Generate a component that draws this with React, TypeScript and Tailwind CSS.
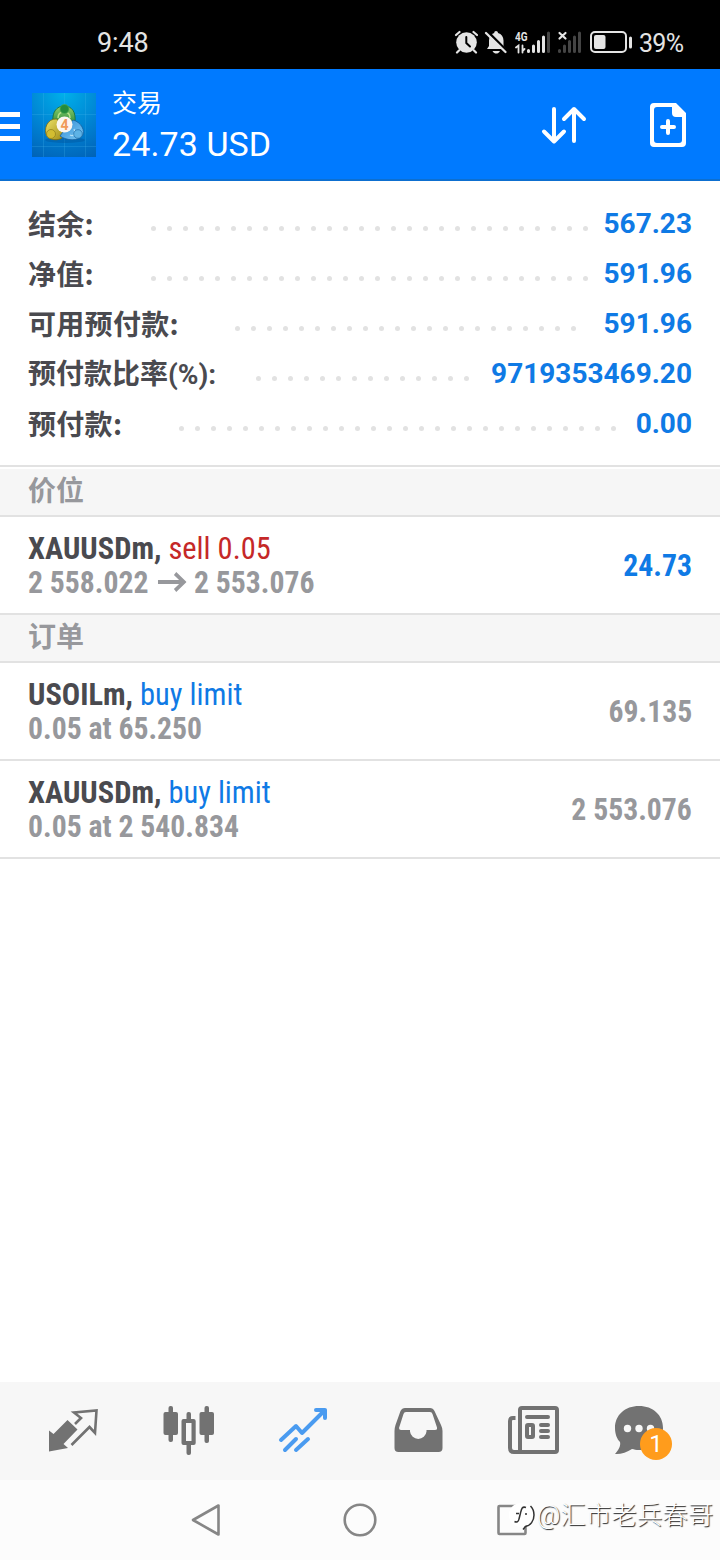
import React from 'react';

interface Balance {
  label: string;
  value: string;
  labelStyle: string;
  dots: number;
}

interface Order {
  symbol: string;
  type: string;
  typeColor: string;
  price: React.ReactNode;
  value: string;
  valueColor: string;
}

const cjk = "pt-0 font-['Noto_Sans_CJK_SC',sans-serif] tracking-[0.3px]";

const balances: Balance[] = [
  { label: '结余:', value: '567.23', labelStyle: `w-[123px] ${cjk}`, dots: 28 },
  { label: '净值:', value: '591.96', labelStyle: `w-[123px] ${cjk}`, dots: 28 },
  { label: '可用预付款:', value: '591.96', labelStyle: `w-[207px] ${cjk}`, dots: 22 },
  { label: '预付款比率(%):', value: '9719353469.20', labelStyle: 'w-[228px] pt-[4px]', dots: 14 },
  { label: '预付款:', value: '0.00', labelStyle: `w-[151px] ${cjk}`, dots: 28 },
];

const positions: Order[] = [
  {
    symbol: 'XAUUSDm,',
    type: 'sell 0.05',
    typeColor: 'text-[#c52828]',
    price: (
      <>
        2 558.022
        <svg className="ml-[10px] mr-[8px] inline-block align-[1px]" width="31" height="20" viewBox="0 0 31 20" fill="none" stroke="currentColor" strokeWidth="3.8">
          <path d="M0 10H28M18.500 1.5L28 10L18.500 18.5" />
        </svg>
        2 553.076
      </>
    ),
    value: '24.73',
    valueColor: 'text-[#0f7ae5]',
  },
];

const orders: Order[] = [
  { symbol: 'USOILm,', type: 'buy limit', typeColor: 'text-[#0f7ae5]', price: '0.05 at 65.250', value: '69.135', valueColor: 'text-[#97989c]' },
  { symbol: 'XAUUSDm,', type: 'buy limit', typeColor: 'text-[#0f7ae5]', price: '0.05 at 2 540.834', value: '2 553.076', valueColor: 'text-[#97989c]' },
];

function StatusBar() {
  return (
    <div className="flex h-[69px] items-center bg-black pl-[97px] pt-[15px] text-[#e4e4e4]">
      <span className="w-[357px] pt-[2px] text-[27px] leading-[24px] tracking-[-0.1px]">9:48</span>
      <svg width="24" height="24" viewBox="0 0 24 24" fill="none" stroke="#e4e4e4" strokeLinecap="round">
        <circle cx="12.5" cy="12.5" r="10.3" fill="#e4e4e4" stroke="none" />
        <path d="M2 5L5.5 2M19.5 2L23 5M5 20.5L3 22.5M20 20.5L22 22.5" strokeWidth="2.2" />
        <path d="M12.3 7V13L16 16.5" stroke="#000" strokeWidth="2" />
      </svg>
      <svg className="ml-[6px]" width="24" height="24" viewBox="0 0 24 24">
        <path d="M12 1C13 1 14 1.8 14 3C17.5 4 19.5 6.8 19.5 10.5V16L22 19H3L5 16V10.5C5 6.8 7 4 10.2 3C10.2 1.8 11 1 12 1Z" fill="#e4e4e4" />
        <path d="M8.5 21H16C15 23 13.5 23.5 12.3 23.5C11 23.5 9.5 23 8.5 21Z" fill="#e4e4e4" />
        <path d="M3.5 1.5L23.5 21.5" stroke="#000" strokeWidth="2.5" />
        <path d="M2 3L21.5 22" stroke="#e4e4e4" strokeWidth="2.3" strokeLinecap="round" />
      </svg>
      <svg className="ml-[7px]" width="66" height="24" viewBox="0 0 66 24" strokeLinecap="round">
        <text x="0" y="10.5" fontSize="13" fontWeight="700" fill="#e4e4e4" textLength="12.5" lengthAdjust="spacingAndGlyphs">4G</text>
        <path d="M1 17.5L3.5 15.5V22.5M7.5 15.5V22.5M7.5 21L9.5 19" stroke="#e4e4e4" strokeWidth="1.8" fill="none" />
        <path d="M13.5 20.5V21.5M18.5 16V21.5M23.5 11.5V21.5M28.5 7V21.5" stroke="#e4e4e4" strokeWidth="3" />
        <path d="M33.5 3V21.5" stroke="#444" strokeWidth="3" />
        <path d="M44.5 3L50.5 8.5M50.5 3L44.5 8.5" stroke="#e4e4e4" strokeWidth="2.2" />
        <path d="M44.5 20.5V21.5M49.5 16V21.5M54.5 11.5V21.5M59.5 7V21.5M64.5 3V21.5" stroke="#444" strokeWidth="3" />
      </svg>
      <svg className="ml-[9px]" width="43" height="24" viewBox="0 0 43 24">
        <rect x="1" y="2" width="35" height="20" rx="4" fill="none" stroke="#e4e4e4" strokeWidth="2" />
        <rect x="4" y="5" width="11.5" height="14" rx="2" fill="#e4e4e4" />
        <rect x="39" y="6.5" width="3" height="12" rx="1.5" fill="#e4e4e4" />
      </svg>
      <span className="ml-[6px] pt-[3px] text-[25px] leading-[24px] tracking-[-0.7px]">39%</span>
    </div>
  );
}

function Logo() {
  return (
    <svg width="64" height="64" viewBox="0 0 64 64">
      <defs>
        <radialGradient id="sky" cx="0.5" cy="0" r="1.1">
          <stop offset="0" stopColor="#00b0ea" />
          <stop offset="0.6" stopColor="#007fd0" />
          <stop offset="1" stopColor="#0063b8" />
        </radialGradient>
        <linearGradient id="green" x1="0" y1="0" x2="0" y2="1">
          <stop offset="0" stopColor="#8fd06c" />
          <stop offset="1" stopColor="#157b31" />
        </linearGradient>
        <linearGradient id="yellow" x1="0" y1="0" x2="1" y2="1">
          <stop offset="0" stopColor="#eee36a" />
          <stop offset="1" stopColor="#a08b14" />
        </linearGradient>
        <linearGradient id="blue" x1="0" y1="0" x2="1" y2="1">
          <stop offset="0" stopColor="#2f8cd6" />
          <stop offset="1" stopColor="#7cc8f3" />
        </linearGradient>
      </defs>
      <rect width="64" height="64" fill="url(#sky)" />
      <path d="M11.5 0V64M32.5 0V64M53.5 0V64M0 21.5H64M0 53.5H64" stroke="#48b6ee" strokeOpacity="0.3" strokeWidth="0.8" />
      <ellipse cx="33" cy="47" rx="20" ry="3" fill="#004a90" opacity="0.35" />
      <path d="M21 28C20 19 25 13 32 13C40 13 44 19 43 29L39 35L25 30Z" fill="url(#green)" stroke="#17692f" strokeWidth="0.8" />
      <path d="M25 26C15 25 11 37 15 43C17 47 26 48 30 45L32 38Z" fill="url(#yellow)" stroke="#756713" strokeWidth="0.8" />
      <path d="M41 27C49 29 54 38 50 43C46 48 35 48 28 43L33 36Z" fill="url(#blue)" stroke="#17609e" strokeWidth="0.8" />
      <path d="M26 25C26 20 29 19 32 19C36 19 38 21 38 25" fill="none" stroke="#b7e18b" strokeWidth="1.5" />
      <path d="M38 42C42 44 44 40 42 36" fill="none" stroke="#b5e1f8" strokeWidth="1.2" />
      <circle cx="32.5" cy="16" r="4.5" fill="#248b3c" stroke="#4dac52" strokeWidth="0.7" />
      <circle cx="19" cy="41" r="4.5" fill="#d3bd31" stroke="#8f7d19" strokeWidth="0.7" />
      <circle cx="46" cy="41" r="4.3" fill="#5eb3e6" stroke="#1f6da8" strokeWidth="0.7" />
      <circle cx="32.5" cy="31.5" r="8" fill="#fbf6f0" />
      <text x="32.5" y="36.8" textAnchor="middle" fontSize="14" fontWeight="700" fill="#f09a58">4</text>
    </svg>
  );
}

function Header() {
  return (
    <header className="flex h-28 items-center border-b-2 border-[#0d6fd0] bg-[#007aff] pt-[2px] text-white">
      <div className="mr-3 mt-[2px] flex w-5 flex-col gap-[7px]">
        <span className="h-[5px] bg-white" />
        <span className="h-[5px] bg-white" />
        <span className="h-[5px] bg-white" />
      </div>
      <Logo />
      <div className="ml-4 flex w-[428px] flex-col pt-[4px]">
        <span className="text-[25px] leading-[32px]">交易</span>
        <span className="mt-[2px] text-[34px] leading-[44px] tracking-[0.1px]">24.73 USD</span>
      </div>
      <svg width="48" height="40" viewBox="0 0 48 40" fill="none" stroke="white" strokeWidth="4" strokeLinecap="round" strokeLinejoin="round">
        <path d="M14 4V36M4 26.5L14 36.5L24 26.5M34 36V4M24 14L34 4L44 14" />
      </svg>
      <svg className="ml-[60px]" width="40" height="48" viewBox="0 0 40 48">
        <path fillRule="evenodd" fill="white" d="M6 2H28L38 12V42Q38 46 34 46H6Q2 46 2 42V6Q2 2 6 2ZM9 6Q6 6 6 9V39Q6 42 9 42H31Q34 42 34 39V16H28Q24 16 24 12V6Z" />
        <path d="M14 26H26M20 20V32" stroke="white" strokeWidth="4" strokeLinecap="round" />
      </svg>
    </header>
  );
}

function BalanceRow({ label, value, labelStyle, dots }: Balance) {
  return (
    <div className="flex h-[50px] items-center">
      <span className={`${labelStyle} shrink-0 whitespace-nowrap text-[28px] leading-[40px] font-bold text-[#4a4a4f]`}>{label}</span>
      <div className="mt-[11px] flex gap-[11px]">
        {Array.from({ length: dots }, (_, i) => (
          <span key={i} className="size-[5px] rounded-full bg-[#e2e2e2]" />
        ))}
      </div>
      <span className="ml-auto pt-[2px] text-[28px] leading-[40px] font-bold text-[#0f7ae5]">{value}</span>
    </div>
  );
}

function SectionTitle({ title }: { title: string }) {
  return (
    <div className="flex h-12 items-center border-b-2 border-[#e2e2e2] bg-[#f6f6f6] px-7 pb-[6px] font-['Noto_Sans_CJK_SC',sans-serif] text-[28px] leading-[40px] font-bold text-[#97989c]">
      {title}
    </div>
  );
}

function OrderRow({ symbol, type, typeColor, price, value, valueColor }: Order) {
  return (
    <div className="flex h-[98px] items-center justify-between border-b-2 border-[#e2e2e2] px-7 font-['Roboto_Condensed',Roboto,sans-serif] text-[32px] leading-[34px] [font-stretch:75%]">
      <div className="whitespace-nowrap">
        <div className="origin-left scale-x-[0.952]">
          <span className="font-bold text-[#4a4a4f]">{symbol}</span> <span className={typeColor}>{type}</span>
        </div>
        <div className="origin-left scale-x-[0.928] font-bold text-[#97989c]">{price}</div>
      </div>
      <span className={`origin-right scale-x-[0.928] font-bold ${valueColor}`}>{value}</span>
    </div>
  );
}

function TabBar() {
  return (
    <nav className="flex h-[98px] items-center justify-between bg-[#f7f7f7] pl-[46px] pr-[45px] pt-[6px] text-[#727272]">
      <svg width="56" height="56" viewBox="0 0 56 56">
        <path d="M3 24.5L7.5 28L21.5 14L31.5 23.5L17.5 38L22 42L3 45.5Z" fill="currentColor" />
        <path d="M29 18L35 12L28 6.5L50.5 4.5L49 27L43.5 21L25.5 39" fill="none" stroke="currentColor" strokeWidth="2.6" />
      </svg>
      <svg width="56" height="56" viewBox="0 0 56 56" fill="currentColor">
        <rect x="2.5" y="6" width="14.5" height="23" rx="2" />
        <rect x="7.5" y="0" width="4.5" height="36" rx="2" />
        <rect x="38.5" y="6" width="14.5" height="23" rx="2" />
        <rect x="43.5" y="0" width="4.5" height="37" rx="2" />
        <path fillRule="evenodd" d="M22.5 13H32.5Q34.7 13 34.7 15V37Q34.7 39 32.7 39H22.5Q20.5 39 20.5 37V15Q20.5 13 22.5 13ZM25 17V35H30.5V17Z" />
        <rect x="25.5" y="6" width="4.5" height="9" rx="2" />
        <rect x="25.5" y="37" width="4.5" height="12" rx="2" />
      </svg>
      <svg width="56" height="56" viewBox="0 0 56 56" fill="none" stroke="#4a9bf0" strokeWidth="4" strokeLinecap="round" strokeLinejoin="round">
        <path d="M6 34L21 20L27 27L50 4M41 4H50V12" />
        <path d="M10 44L21 33M21 44L33 33" />
      </svg>
      <svg width="56" height="56" viewBox="0 0 56 56">
        <path fillRule="evenodd" fill="currentColor" d="M15 2H40Q43 2 44.5 5L51 19Q52.5 22 52.5 25V42Q52.5 46 48.5 46H8.5Q4.5 46 4.5 42V25Q4.5 22 5.5 19L10.5 5Q12 2 15 2ZM16 6Q14 6 13.5 8L9 22Q9 24 11 24H20V25.5A8.3 8.3 0 0 0 36.5 25.5V24H45Q47.5 24 47 21.5L42.5 8Q42 6 40 6Z" />
      </svg>
      <svg width="56" height="56" viewBox="0 0 56 56" fill="none" stroke="currentColor" strokeWidth="4">
        <rect x="16" y="2" width="37" height="44" rx="2" />
        <path d="M11.5 12H9Q6 12 6 15V42Q6 46 10 46H18" />
        <path d="M23 11H44M37 19H44M37 25H44M37 31H44" strokeLinecap="round" />
        <rect x="23" y="19" width="6" height="12" rx="1" />
      </svg>
      <div className="relative -ml-[7px] mr-[7px] size-14">
        <svg width="56" height="56" viewBox="0 0 56 56" fill="currentColor">
          <path d="M27 0C41 0 51 9 51 22C51 35 40 44 27 44C24 44 22 43.5 20 43C15 46.5 8 48.5 3 48C6.5 44 9 40 8 36C5 33 3 28 3 22C3 9 13 0 27 0Z" />
          <circle cx="15.5" cy="22.5" r="3.7" fill="#f7f7f7" />
          <circle cx="27" cy="22.5" r="3.7" fill="#f7f7f7" />
          <circle cx="38.5" cy="22.5" r="3.7" fill="#f7f7f7" />
        </svg>
        <span className="absolute left-[28px] top-[22px] flex size-8 items-center justify-center rounded-full bg-[#ff9c1c] text-[24px] leading-none text-white">1</span>
      </div>
    </nav>
  );
}

function SystemNav() {
  return (
    <div className="relative flex h-20 items-center bg-[#fcfcfc] pl-[190px]">
      <svg width="32" height="34" viewBox="0 0 32 34" fill="none" stroke="#868686" strokeWidth="2.6" strokeLinejoin="round">
        <path d="M28.5 2.5V31.5L3 17Z" />
      </svg>
      <svg className="ml-[121px]" width="34" height="34" viewBox="0 0 34 34" fill="none" stroke="#868686" strokeWidth="2.6">
        <circle cx="17" cy="17" r="15.3" />
      </svg>
      <svg className="ml-[119px]" width="34" height="34" viewBox="0 0 34 34" fill="none" stroke="#868686" strokeWidth="2.6">
        <rect x="2.5" y="3" width="27" height="28" rx="1" />
      </svg>
      <div className="absolute left-[508px] top-[17px] flex items-center whitespace-nowrap">
        <svg width="28" height="34" viewBox="0 0 28 34">
          <path d="M13 5C20 5 25 10 25 17C25 23 22 27 17 28L14 32V29C6 29 1 24 1 17C1 10 6 5 13 5Z" fill="white" />
          <path d="M22.5 8C25 10.5 26 13.5 26 17C26 23 22.5 27.5 17.5 28.5L15 31.5" fill="none" stroke="#333" strokeWidth="1.5" />
          <path d="M18 9.5C14 8 13.5 11 12.5 15L11 21C10.5 24 8.5 24.5 6.5 23.5M8 15.5H11M17 16H19" fill="none" stroke="#333" strokeWidth="1.5" />
        </svg>
        <span className="ml-[1px] text-[25.5px] leading-[36px] font-light text-white [text-shadow:1px_1px_1px_#222]">@汇市老兵春哥</span>
      </div>
    </div>
  );
}

export default function App() {
  return (
    <div className="flex h-[1560px] w-[720px] flex-col overflow-hidden bg-white font-[Roboto,'Noto_Sans_CJK_SC',sans-serif]">
      <StatusBar />
      <Header />
      <main className="flex-1">
        <section className="border-b-2 border-[#e2e2e2] px-7 pb-[17px] pt-[17px]">
          {balances.map((balance) => (
            <BalanceRow key={balance.label} {...balance} />
          ))}
        </section>
        <div className="pt-[2px]">
          <SectionTitle title="价位" />
        </div>
        {positions.map((order, i) => (
          <OrderRow key={i} {...order} />
        ))}
        <SectionTitle title="订单" />
        {orders.map((order, i) => (
          <OrderRow key={i} {...order} />
        ))}
      </main>
      <TabBar />
      <SystemNav />
    </div>
  );
}
